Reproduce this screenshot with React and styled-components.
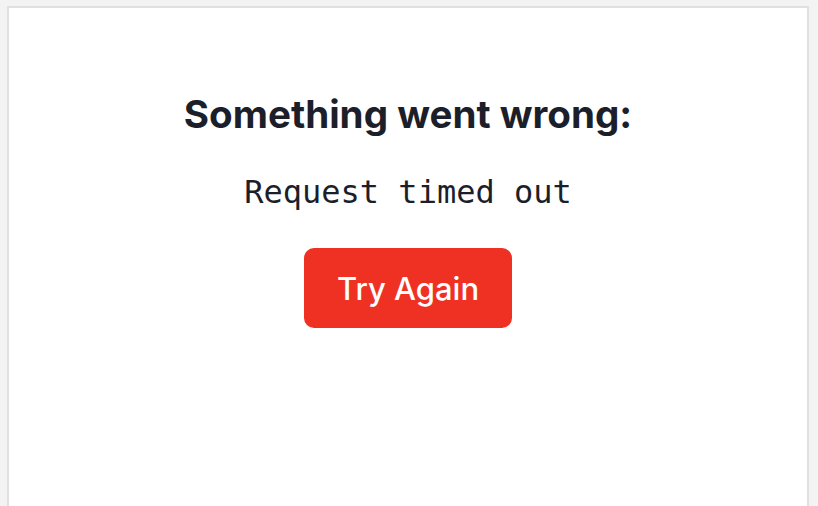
import React from 'react';
import styled, { createGlobalStyle } from 'styled-components';

const GlobalStyle = createGlobalStyle`
  html, body {
    margin: 0;
    padding: 0;
    background: #f3f3f3;
    height: 100%;
    overflow: hidden;
  }
`;

const Page = styled.div`
  padding: 6px 9px 0 7px;
  height: 506px;
  box-sizing: border-box;
`;

const Card = styled.div`
  background: #ffffff;
  border: 2px solid #e0e0e0;
  border-bottom: none;
  height: 100%;
  box-sizing: border-box;
  display: flex;
  flex-direction: column;
  align-items: center;
  padding-top: 84px;
`;

const Title = styled.h2`
  margin: 0;
  font-family: Inter, "Liberation Sans", sans-serif;
  font-weight: 700;
  font-size: 38.6px;
  line-height: 44px;
  color: #1c1f2a;
`;

const Message = styled.pre`
  margin: 36px 0 0;
  font-family: "DejaVu Sans Mono", "Liberation Mono", monospace;
  font-size: 32px;
  line-height: 40px;
  color: #1c1f2a;
`;

const RetryButton = styled.button`
  margin-top: 36px;
  width: 208px;
  height: 80px;
  border: none;
  border-radius: 10px;
  background: #ef3124;
  color: #ffffff;
  font-family: Inter, "Liberation Sans", sans-serif;
  font-weight: 500;
  font-size: 31px;
  cursor: pointer;
`;

export default function App() {
  return (
    <>
      <GlobalStyle />
      <Page>
        <Card>
          <Title>Something went wrong:</Title>
          <Message>Request timed out</Message>
          <RetryButton>Try Again</RetryButton>
        </Card>
      </Page>
    </>
  );
}
